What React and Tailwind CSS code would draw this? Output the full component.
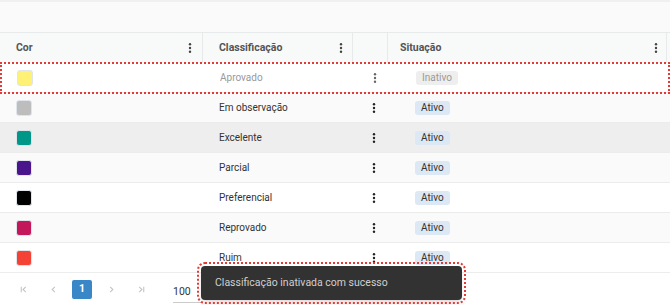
import React from 'react';

const rows = [
    { color: '#fff176', name: 'Aprovado', status: 'Inativo', bg: 'bg-white', selected: true },
    { color: '#bdbdbd', name: 'Em observação', status: 'Ativo', bg: 'bg-[#fafafa]' },
    { color: '#009688', name: 'Excelente', status: 'Ativo', bg: 'bg-[#eeeeee]' },
    { color: '#4a148c', name: 'Parcial', status: 'Ativo', bg: 'bg-[#fafafa]' },
    { color: '#000000', name: 'Preferencial', status: 'Ativo', bg: 'bg-white' },
    { color: '#c2185b', name: 'Reprovado', status: 'Ativo', bg: 'bg-[#fafafa]' },
    { color: '#f44336', name: 'Ruim', status: 'Ativo', bg: 'bg-white' },
];

const Kebab = ({ className = 'text-[#222]' }) => (
    <svg width="4" height="12" viewBox="0 0 4 12" className={className}>
        <circle cx="2" cy="2.2" r="1.2" fill="currentColor" />
        <circle cx="2" cy="6" r="1.2" fill="currentColor" />
        <circle cx="2" cy="9.8" r="1.2" fill="currentColor" />
    </svg>
);

const PageIcon = ({ type }) => (
    <svg width="9" height="9" viewBox="0 0 10 10" className="text-[#c4c4c4]" fill="none" stroke="currentColor" strokeWidth="1.2">
        {type === 'first' && (<><path d="M2.5 2v6" /><path d="M7.5 2L4.5 5l3 3" /></>)}
        {type === 'prev' && <path d="M6.5 2L3.5 5l3 3" />}
        {type === 'next' && <path d="M3.5 2l3 3-3 3" />}
        {type === 'last' && (<><path d="M2.5 2l3 3-3 3" /><path d="M7.5 2v6" /></>)}
    </svg>
);

const grid = 'grid grid-cols-[203px_150px_35px_279px_3px]';

const App = () => {
    return (
        <div className="relative w-[670px] h-[305px] overflow-hidden bg-white text-[10px] text-[#333]" style={{ fontFamily: 'Roboto, "Liberation Sans", sans-serif' }}>
            {/* toolbar area */}
            <div className="h-[33px] bg-[#fafafa] border-t-2 border-[#f0f0f0] border-b border-b-[#e6eaea]"></div>

            {/* header */}
            <div className={`${grid} h-[30px] bg-[#f8f9f9] font-bold text-[10.5px] text-[#555]`}>
                <div className="flex items-center justify-between pl-4 pr-[10px] border-r border-[#e6eaea]">
                    <span>Cor</span>
                    <Kebab className="text-[#444]" />
                </div>
                <div className="flex items-center justify-between pl-4 pr-[9px] border-r border-[#e6eaea]">
                    <span>Classificação</span>
                    <Kebab className="text-[#444]" />
                </div>
                <div className="border-r border-[#e6eaea]"></div>
                <div className="flex items-center justify-between pl-[12px] pr-[8px] border-r border-[#e6eaea]">
                    <span>Situação</span>
                    <Kebab className="text-[#444]" />
                </div>
                <div></div>
            </div>

            {/* body */}
            {rows.map(r => (
                <div
                    key={r.name}
                    className={`${grid} h-[30px] border-b border-[#ececec] ${r.bg} ${r.selected ? 'outline-2 outline-dotted outline-[#e53935] -outline-offset-1 mx-[1px] grid-cols-[202px_150px_35px_279px_2px]' : ''}`}
                >
                    <div className="flex items-center pl-4">
                        <span className="w-4 h-4 rounded-[3px] border border-[#dfe5ea]" style={{ backgroundColor: r.color }}></span>
                    </div>
                    <div className={`flex items-center pl-4 ${r.selected ? 'text-[#999]' : 'text-[#333]'}`}>{r.name}</div>
                    <div className="flex items-center justify-center pl-[6px]">
                        <Kebab className={r.selected ? 'text-[#666]' : 'text-[#222]'} />
                    </div>
                    <div className="flex items-center pl-[27px]">
                        <span className={`px-[6px] h-[14px] leading-[14px] rounded-[3px] ${r.selected ? 'bg-[#eeeeee] text-[#999]' : 'bg-[#dce8f4] text-[#333]'}`}>
                            {r.status}
                        </span>
                    </div>
                    <div></div>
                </div>
            ))}

            {/* pagination */}
            <div className="flex items-center h-[32px] pl-[8px]">
                <span className="w-[30px] flex justify-center"><PageIcon type="first" /></span>
                <span className="w-[30px] flex justify-center"><PageIcon type="prev" /></span>
                <span className="w-5 h-[19px] ml-[4px] rounded-[2px] bg-[#3a87c8] text-white font-bold text-[10.5px] flex items-center justify-center">1</span>
                <span className="w-[30px] ml-[4px] flex justify-center"><PageIcon type="next" /></span>
                <span className="w-[30px] flex justify-center"><PageIcon type="last" /></span>
                <span className="ml-[17px] pr-[12px] pb-[2px] border-b border-[#ccc] mt-[9px] leading-[16px] text-[10.5px]">100</span>
            </div>

            {/* toast */}
            <div className="absolute left-[201px] top-[266px] w-[261px] h-[34px] rounded-[4px] bg-[#323232] text-[#d0d0d0] text-[10.5px] flex items-center pl-[14px] outline-2 outline-dotted outline-[#e53935] outline-offset-[2px] shadow-md">
                Classificação inativada com sucesso
            </div>
        </div>
    );
};

export default App;
